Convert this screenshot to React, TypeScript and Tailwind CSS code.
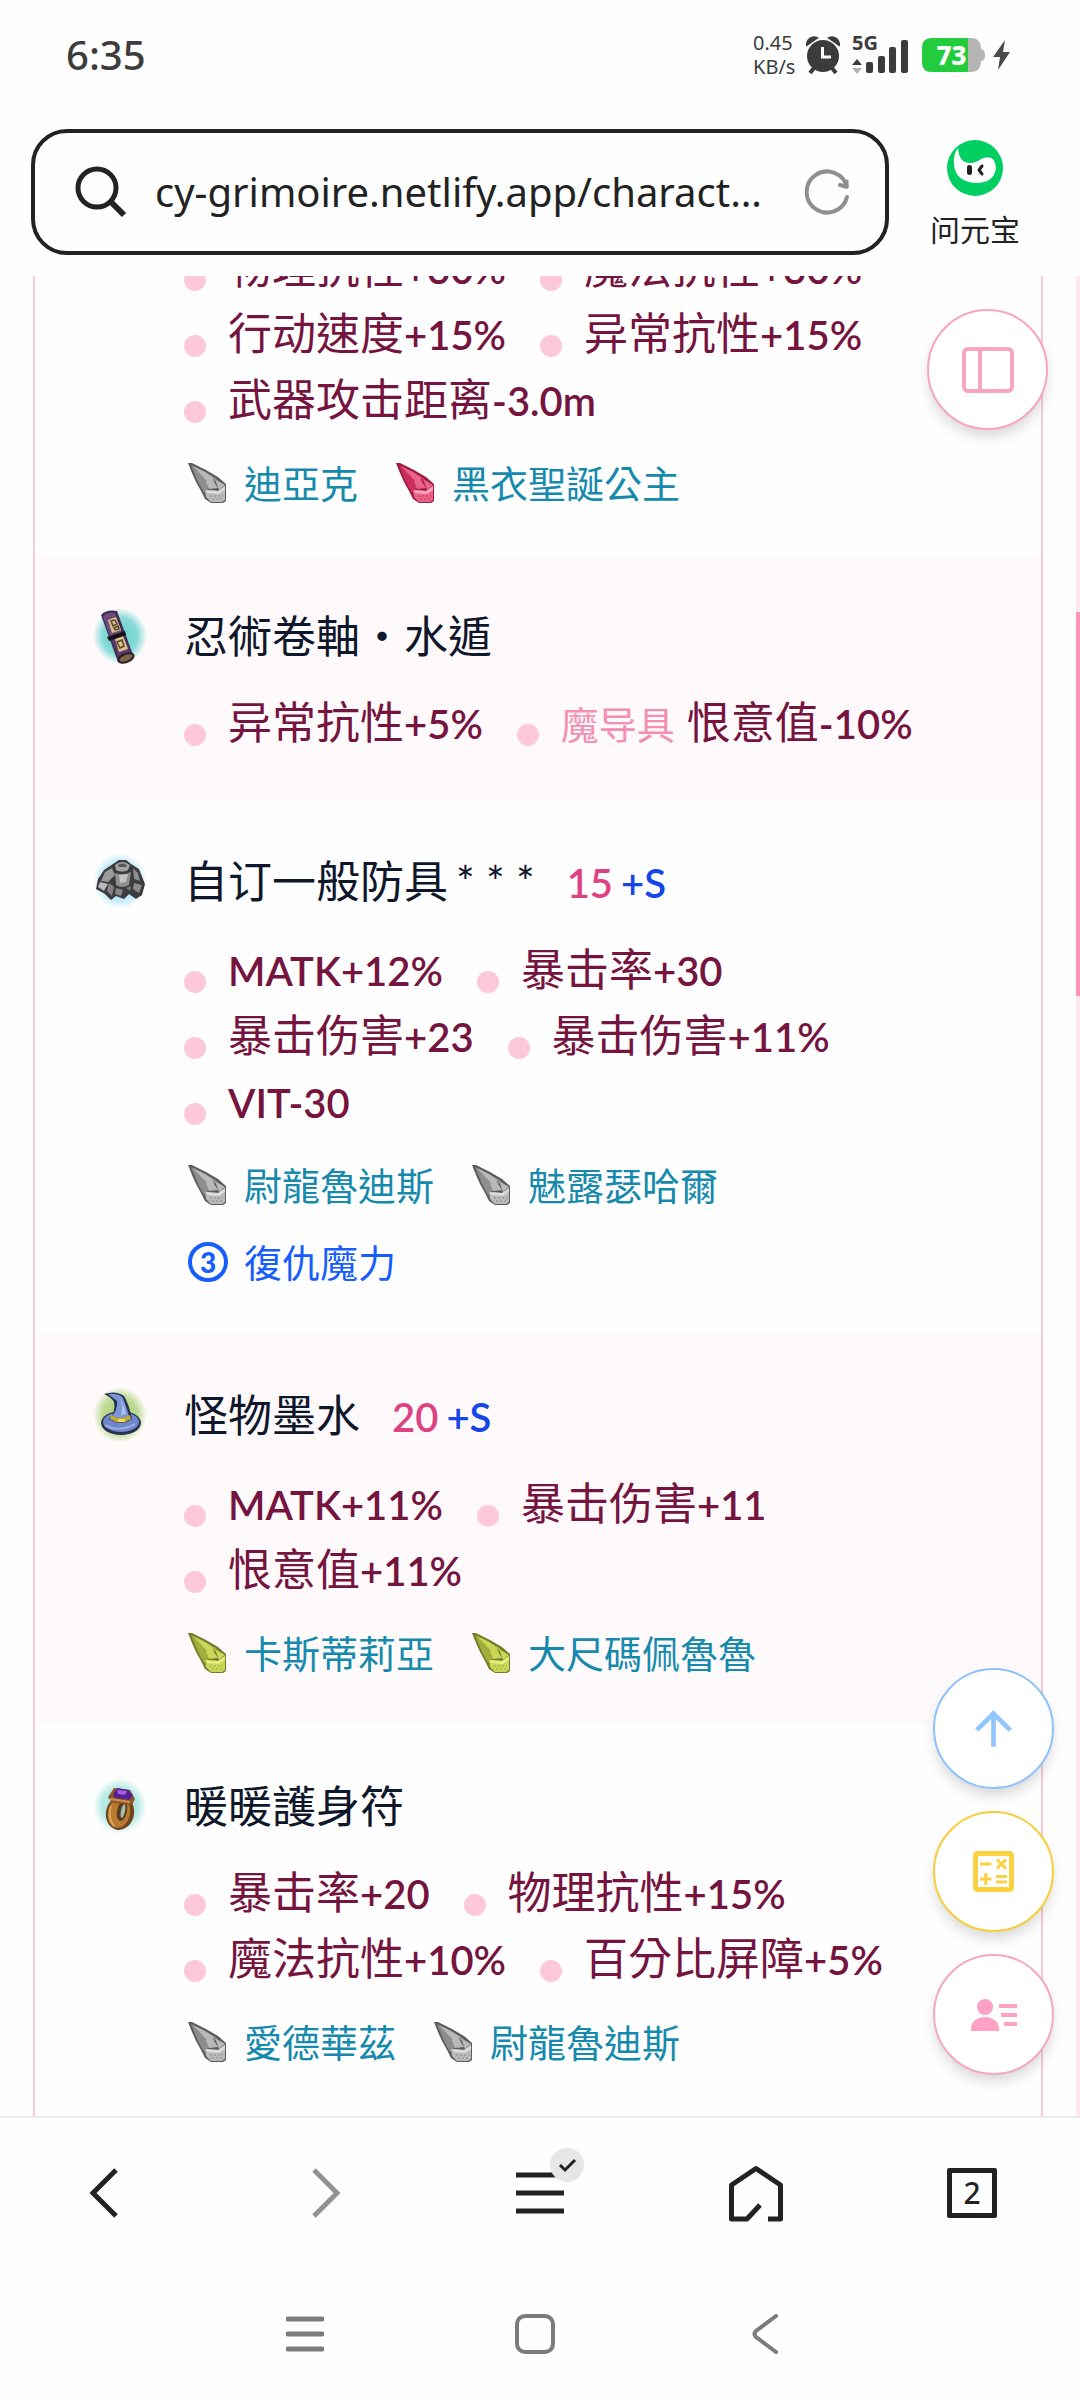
import type { ReactNode } from "react";

const uiFont = "font-['Noto_Sans','Noto_Sans_CJK_SC',sans-serif]";
const cardFont = "font-['Lato','Noto_Sans_CJK_TC',sans-serif]";

type CrystalTone = "gray" | "red" | "lime";

interface Stat {
  tag?: string;
  name?: string;
  value: string;
}

interface Equipment {
  icon?: ReactNode;
  title?: string;
  stars?: string;
  refine?: string;
  stats: Stat[];
  crystals?: { tone: CrystalTone; name: string }[];
  skill?: string;
}

const crystalColors: Record<CrystalTone, [string, string, string, string]> = {
  gray: ["#5c5c5c", "#8d8d8d", "#b9b9b9", "#dcdcdc"],
  red: ["#a01a46", "#c92f5c", "#ea6489", "#fda3ba"],
  lime: ["#757c2c", "#a3ad3c", "#c9d657", "#e6f07f"],
};

function Crystal({ tone }: { tone: CrystalTone }) {
  const [edge, side, face, light] = crystalColors[tone];
  return (
    <svg viewBox="0 0 44 44" className="size-11 shrink-0" aria-hidden="true">
      <path d="M4 2 L8 2 L22 9 L34 16 L42 23 L42 40 L39 42 L27 42 L21 38 L17 30 L12 21 L8 12 Z" fill={edge} />
      <path d="M7 4 L21 11 L33 18 L24 28 L20 32 L14 21 Z" fill={side} />
      <path d="M9 5 L21 11 L30 17 L25 22 Z" fill={face} />
      <path d="M22 20 L28 18 L34 27 L25 28 Z" fill={face} />
      <path d="M31 18 L41 24 L35 29 Z" fill={face} />
      <path d="M21 29 L35 30 L41 25 L41 39 L38 41 L27 41 L22 36 Z" fill={face} />
      <path d="M22 29 L34 30 L41 25 L41 29 L35 33 L23 32 Z" fill={light} />
      <path d="M28 38 h11 M26 35 h13" stroke={side} strokeWidth="1" strokeDasharray="2 2" />
    </svg>
  );
}

function Glow({ id, color }: { id: string; color: string }) {
  return (
    <>
      <defs>
        <radialGradient id={id}>
          <stop offset="0" stopColor={color} />
          <stop offset="0.65" stopColor={color} stopOpacity="0.75" />
          <stop offset="1" stopColor={color} stopOpacity="0" />
        </radialGradient>
      </defs>
      <ellipse cx="28" cy="28" rx="27" ry="28" fill={`url(#${id})`} />
    </>
  );
}

function ScrollIcon() {
  return (
    <svg viewBox="0 0 56 56" className="size-14" aria-hidden="true">
      <Glow id="glow-scroll" color="#5fcfcb" />
      <path d="M9 7 Q14 1 25 3 L41 47 Q36 56 26 54 Z" fill="#3f2a4d" />
      <path d="M11 8 Q16 3 23 5 L30 25 L18 29 Z" fill="#6d4a7c" />
      <path d="M19 31 L32 27 L39 46 Q34 49 27 50 Z" fill="#5a3b68" />
      <path d="M16 12 L24 9 L29 22 L20 25 Z" fill="#d9c28c" />
      <path d="M23 31 L31 28 L36 41 L27 44 Z" fill="#d9c28c" />
      <path d="M19 13 L23 12 L25 16 L21 18 Z M22 20 L26 18 L27 21 L23 22 Z M25 34 L30 32 L32 38 L28 40 Z" fill="none" stroke="#59442c" strokeWidth="1.5" />
      <path d="M15 29 L33 23 L34 27 L17 33 Z" fill="#16121b" />
      <ellipse cx="34" cy="50" rx="8" ry="4" transform="rotate(-22 34 50)" fill="#7b6745" stroke="#2a1d2d" strokeWidth="2" />
    </svg>
  );
}

function ArmorIcon() {
  return (
    <svg viewBox="0 0 56 56" className="size-14" aria-hidden="true">
      <Glow id="glow-armor" color="#a5e2f4" />
      <path d="M21 11 L27 7 H34 L39 11 L47 16 L53 31 L50 42 L44 46 L37 41 L32 46 L24 43 L19 47 L13 41 L4 36 L6 26 L12 17 Z" fill="#3c3c3e" />
      <path d="M23 12 Q30 6 38 12 L36 17 Q30 20 24 17 Z" fill="#a4a4a4" />
      <path d="M26 12 Q30 9 35 12 L34 14 H27 Z" fill="#555" />
      <path d="M23 20 Q31 23 39 19 L37 32 Q30 36 24 32 Z" fill="#8f8f8f" />
      <path d="M27 22 L36 21 L34 29 L28 30 Z" fill="#c4c4c4" />
      <path d="M13 19 L20 15 L23 22 L16 29 L9 28 Z" fill="#9b9b9b" />
      <path d="M8 29 L16 31 L12 38 L6 34 Z" fill="#b9b9b9" />
      <path d="M17 30 L22 34 L20 43 L15 38 Z M24 35 L31 37 L29 43 L23 41 Z" fill="#858585" />
      <path d="M41 15 L46 20 L48 28 L42 26 Z M42 30 L50 32 L47 40 L41 36 Z" fill="#8c8c8c" />
      <path d="M34 35 L39 33 L38 38 Z" fill="#777" />
    </svg>
  );
}

function HatIcon() {
  return (
    <svg viewBox="0 0 56 56" className="size-14" aria-hidden="true">
      <Glow id="glow-hat" color="#a9cf71" />
      <ellipse cx="29" cy="36" rx="20" ry="12" fill="#27324f" />
      <ellipse cx="29" cy="35" rx="18" ry="10" fill="#6f87ca" />
      <path d="M12 7 Q24 3 32 9 Q37 17 40 32 Q29 40 17 32 Q24 25 22 15 Q19 10 12 7 Z" fill="#27324f" />
      <path d="M16 7 Q27 6 31 11 Q34 19 37 29 Q29 33 20 29 Q26 22 25 14 Z" fill="#7c96da" />
      <path d="M27 10 Q32 17 34 27 L29 28 Q32 18 27 10 Z" fill="#b0c0ee" />
      <path d="M19 28 Q28 34 38 28 L39 32 Q29 39 18 32 Z" fill="#c5aa35" />
      <path d="M26 32 h7 v3 h-7 Z" fill="#eadd65" />
      <path d="M13 38 Q27 46 43 37" fill="none" stroke="#9cb0e8" strokeWidth="2" />
    </svg>
  );
}

function RingIcon() {
  return (
    <svg viewBox="0 0 56 56" className="size-14" aria-hidden="true">
      <Glow id="glow-ring" color="#9fe3de" />
      <ellipse cx="28" cy="35" rx="14" ry="17" transform="rotate(12 28 35)" fill="#6f431b" />
      <ellipse cx="27" cy="35" rx="11" ry="15" transform="rotate(12 27 35)" fill="#b87a32" />
      <ellipse cx="30" cy="33" rx="5" ry="10" transform="rotate(12 30 33)" fill="#5b3a1d" />
      <ellipse cx="31" cy="33" rx="2" ry="7" transform="rotate(12 31 33)" fill="#9fbfae" />
      <path d="M19 28 Q15 39 22 48" fill="none" stroke="#dba85c" strokeWidth="2" />
      <path d="M16 19 L22 10 L38 12 L43 21 L40 27 L20 25 Z" fill="#8f5729" />
      <path d="M21 17 L25 10 L37 12 L41 18 L37 22 L23 20 Z" fill="#57208d" />
      <path d="M25 12 L35 13 L33 17 L26 16 Z" fill="#a55fe0" />
      <path d="M18 21 L38 24" stroke="#cf8f50" strokeWidth="2" />
    </svg>
  );
}

const equipment: Equipment[] = [
  {
    stats: [
      { name: "物理抗性", value: "+30%" },
      { name: "魔法抗性", value: "+30%" },
      { name: "行动速度", value: "+15%" },
      { name: "异常抗性", value: "+15%" },
      { name: "武器攻击距离", value: "-3.0m" },
    ],
    crystals: [
      { tone: "gray", name: "迪亞克" },
      { tone: "red", name: "黑衣聖誕公主" },
    ],
  },
  {
    icon: <ScrollIcon />,
    title: "忍術卷軸・水遁",
    stats: [
      { name: "异常抗性", value: "+5%" },
      { tag: "魔导具", name: "恨意值", value: "-10%" },
    ],
  },
  {
    icon: <ArmorIcon />,
    title: "自订一般防具",
    stars: "* * *",
    refine: "15",
    stats: [
      { value: "MATK+12%" },
      { name: "暴击率", value: "+30" },
      { name: "暴击伤害", value: "+23" },
      { name: "暴击伤害", value: "+11%" },
      { value: "VIT-30" },
    ],
    crystals: [
      { tone: "gray", name: "尉龍魯迪斯" },
      { tone: "gray", name: "魅露瑟哈爾" },
    ],
    skill: "復仇魔力",
  },
  {
    icon: <HatIcon />,
    title: "怪物墨水",
    refine: "20",
    stats: [
      { value: "MATK+11%" },
      { name: "暴击伤害", value: "+11" },
      { name: "恨意值", value: "+11%" },
    ],
    crystals: [
      { tone: "lime", name: "卡斯蒂莉亞" },
      { tone: "lime", name: "大尺碼佩魯魯" },
    ],
  },
  {
    icon: <RingIcon />,
    title: "暖暖護身符",
    stats: [
      { name: "暴击率", value: "+20" },
      { name: "物理抗性", value: "+15%" },
      { name: "魔法抗性", value: "+10%" },
      { name: "百分比屏障", value: "+5%" },
    ],
    crystals: [
      { tone: "gray", name: "愛德華茲" },
      { tone: "gray", name: "尉龍魯迪斯" },
    ],
  },
];

function EquipmentRow({ item }: { item: Equipment }) {
  return (
    <li className={`flex gap-9 pr-11 pb-[39px] pl-[57px] even:bg-[#fefafb] ${item.title ? "pt-12" : ""}`}>
      <div className="flex h-[66px] w-14 shrink-0 items-center">{item.icon}</div>
      <div className="min-w-0 flex-1">
        {item.title && (
          <h2 className="mb-[22px] flex items-baseline text-[44px] leading-[66px] text-slate-900">
            <span>{item.title}</span>
            {item.stars && <span className="ml-2">{item.stars}</span>}
            {item.refine && (
              <span className="ml-8 flex gap-2 text-[40px] font-semibold">
                <span className="text-[#dd4383]">{item.refine}</span>
                <span className="text-blue-700">+S</span>
              </span>
            )}
          </h2>
        )}
        <ul className="mb-1 flex flex-wrap gap-x-[34px] text-[44px] leading-[66px] text-[#75143f]">
          {item.stats.map((stat) => (
            <li key={`${stat.name}${stat.value}`} className="flex h-[66px] items-end gap-[22px]">
              <span className="mb-[11px] size-[22px] rounded-full bg-[#fdc9da]" />
              <span className="whitespace-nowrap">
                {stat.tag && <span className="mr-3 text-[38px] text-[#f48fb1]">{stat.tag}</span>}
                {stat.name}
                <span className="text-[40px] font-semibold">{stat.value}</span>
              </span>
            </li>
          ))}
        </ul>
        {item.crystals && (
          <ul className="mt-4 flex flex-wrap gap-x-[34px] text-[38px] leading-[66px] text-[#168aad]">
            {item.crystals.map((crystal) => (
              <li key={crystal.name} className="flex items-center gap-4">
                <Crystal tone={crystal.tone} />
                {crystal.name}
              </li>
            ))}
          </ul>
        )}
        {item.skill && (
          <div className="mt-[11px] flex items-center gap-4 text-[38px] leading-[66px] text-blue-600">
            <span className="ml-1 flex size-10 items-center justify-center rounded-full border-4 border-blue-600 text-[28px] leading-none font-black">3</span>
            {item.skill}
          </div>
        )}
      </div>
    </li>
  );
}

function StatusBar() {
  return (
    <div className="flex h-[110px] shrink-0 items-center justify-between pr-[70px] pl-[66px] text-[#3c3c3c]">
      <time className="text-[40px] leading-none font-medium">6:35</time>
      <div className="flex items-center">
        <div className="w-[53px] text-xl leading-6">
          <div>0.45</div>
          <div>KB/s</div>
        </div>
        <svg viewBox="0 0 34 40" className="h-10 w-[34px]" aria-label="Alarm">
          <circle cx="17" cy="21" r="16" fill="#3c3c3c" />
          <path d="M1 10 A7 7 0 0 1 11 3 Z M33 10 A7 7 0 0 0 23 3 Z" fill="#3c3c3c" stroke="#3c3c3c" strokeWidth="2" />
          <path d="M8 33 L4 38 M26 33 L30 38" stroke="#3c3c3c" strokeWidth="4" />
          <path d="M16.500 12 V22 H25" fill="none" stroke="#fff" strokeWidth="3" />
        </svg>
        <div className="relative ml-3 h-10 w-14">
          <span className="absolute top-0 left-0 text-xl leading-4 font-bold">5G</span>
          <svg viewBox="0 0 56 40" className="size-full" aria-label="Signal">
            <rect x="14" y="27" width="7" height="11" rx="2" fill="#3c3c3c" />
            <rect x="26" y="21" width="7" height="17" rx="2" fill="#3c3c3c" />
            <rect x="37" y="12" width="7" height="26" rx="2" fill="#3c3c3c" />
            <rect x="49" y="5" width="7" height="33" rx="2" fill="#3c3c3c" />
            <path d="M5 24 L10 30 H0 Z" fill="#3c3c3c" />
            <path d="M5 39 L10 33 H0 Z" fill="#b0b0b0" />
          </svg>
        </div>
        <div className="relative ml-[14px] h-[34px] w-[63px]">
          <svg viewBox="0 0 63 34" className="size-full" aria-hidden="true">
            <path d="M10 0 H49 Q59 0 59 11 Q63 11 63 17 Q63 23 59 23 Q59 34 49 34 H10 Q0 34 0 24 V10 Q0 0 10 0 Z" fill="#b5b5b5" />
            <path d="M10 0 H46 V34 H10 Q0 34 0 24 V10 Q0 0 10 0 Z" fill="#23cc3d" />
          </svg>
          <span className="absolute inset-0 flex items-center justify-center pr-1 text-[26px] leading-none font-extrabold text-white">73</span>
        </div>
        <svg viewBox="0 0 17 30" className="ml-2 h-[30px] w-[17px]" aria-label="Charging">
          <path d="M12 0 L0 17 H7 L5 30 L17 12 H10 Z" fill="#4a4a4a" />
        </svg>
      </div>
    </div>
  );
}

function Toolbar() {
  return (
    <header className="flex h-[166px] shrink-0 items-start pt-[19px] pr-[19px] pl-[31px]">
      <div className="flex h-[126px] min-w-0 flex-1 items-center rounded-[36px] border-4 border-[#222] pr-9 pl-10">
        <svg viewBox="0 0 52 52" className="size-[52px] shrink-0" fill="none" stroke="#222" strokeWidth="5" aria-hidden="true">
          <circle cx="22" cy="22" r="19" />
          <path d="M36 36 L49 49" strokeWidth="6" />
        </svg>
        <input
          type="text"
          aria-label="网址"
          defaultValue="cy-grimoire.netlify.app/charact…"
          className="ml-7 min-w-0 flex-1 text-[40px] leading-[60px] text-[#222] outline-none"
        />
        <button type="button" aria-label="刷新">
          <svg viewBox="0 0 44 46" className="h-[46px] w-11" fill="none" stroke="#8f8f8f" strokeWidth="4" strokeLinecap="round" aria-hidden="true">
            <path d="M42 28 A20.500 20.500 0 1 1 42 18 L35 16" strokeLinejoin="bevel" />
            <path d="M42 18 V12" strokeWidth="3" />
          </svg>
        </button>
      </div>
      <button type="button" className="flex w-[172px] flex-col items-center gap-4 pt-[11px] text-[#222]">
        <svg viewBox="0 0 56 56" className="size-14" aria-hidden="true">
          <circle cx="28" cy="28" r="28" fill="#00d062" />
          <path d="M11 8 Q12 23 23 23 Q29 23 34 19 Q48 13 49 28 Q47 43 29 43 Q9 42 7 25 Q6 14 11 8 Z" fill="#fff" />
          <rect x="20" y="25" width="5" height="10" rx="2.500" fill="#222" />
          <path d="M35 26 L32 30 L35 34" fill="none" stroke="#222" strokeWidth="3" strokeLinecap="round" strokeLinejoin="round" />
        </svg>
        <span className="text-[30px] leading-9">问元宝</span>
      </button>
    </header>
  );
}

function FloatingButton({ label, tone, children }: { label: string; tone: string; children: ReactNode }) {
  return (
    <button
      type="button"
      aria-label={label}
      className={`flex size-[121px] items-center justify-center rounded-full border-2 bg-white shadow-[0_8px_14px_-2px_rgba(0,0,0,0.16)] ${tone}`}
    >
      {children}
    </button>
  );
}

function FloatingButtons() {
  return (
    <>
      <div className="absolute top-[33px] right-8">
        <FloatingButton label="侧栏" tone="border-[#f8a5c0] text-[#f8a5c0]">
          <svg viewBox="0 0 52 46" className="h-[46px] w-[52px]" fill="none" stroke="currentColor" strokeWidth="4" aria-hidden="true">
            <rect x="2" y="2" width="48" height="42" rx="4" />
            <path d="M18 2 V44" />
          </svg>
        </FloatingButton>
      </div>
      <div className="absolute right-[26px] bottom-[41px] flex flex-col gap-[22px]">
        <FloatingButton label="回到顶部" tone="border-[#90c2f9] text-[#90c5fd]">
          <svg viewBox="0 0 24 24" className="size-[55px]" fill="currentColor" aria-hidden="true">
            <path d="m4 12 1.410 1.410L11 7.830V20h2V7.830l5.580 5.590L20 12l-8-8z" />
          </svg>
        </FloatingButton>
        <FloatingButton label="计算" tone="border-[#f5cf3b] text-[#fad23f]">
          <svg viewBox="0 0 41 41" className="size-[41px]" fill="none" stroke="currentColor" strokeWidth="5" aria-hidden="true">
            <rect x="2.500" y="2.500" width="36" height="36" rx="2" />
            <path d="M7 13 H18.500 M7 28 H18.500 M12.800 22 V34 M23 25.500 H34 M23 31 H34" strokeWidth="3" />
            <path d="M24 8.500 L33 17.500 M33 8.500 L24 17.500" strokeWidth="3" />
          </svg>
        </FloatingButton>
        <FloatingButton label="角色列表" tone="border-[#f4a7c0] text-[#ffa1c2]">
          <svg viewBox="0 0 46 32" className="h-8 w-[46px]" fill="currentColor" aria-hidden="true">
            <circle cx="14" cy="8" r="8" />
            <path d="M0 32 V30 C0 14 28 14 28 30 V32 Z" />
            <path d="M28 5 H46 V9 H28 Z M30 14 H46 V18 H30 Z M33 23 H46 V27 H33 Z" />
          </svg>
        </FloatingButton>
      </div>
    </>
  );
}

function BrowserNav() {
  return (
    <nav className="grid h-[152px] shrink-0 grid-cols-5 place-items-center border-t-2 border-[#ececec] text-[#222]">
      <button type="button" aria-label="后退">
        <svg viewBox="0 0 30 50" className="mr-2 h-[50px] w-[30px]" fill="none" stroke="currentColor" strokeWidth="5" aria-hidden="true">
          <path d="M27 2 L4 25 L27 48" />
        </svg>
      </button>
      <button type="button" aria-label="前进">
        <svg viewBox="0 0 30 50" className="ml-1 h-[50px] w-[30px]" fill="none" stroke="#929292" strokeWidth="5" aria-hidden="true">
          <path d="M3 2 L26 25 L3 48" />
        </svg>
      </button>
      <button type="button" aria-label="菜单" className="relative">
        <svg viewBox="0 0 48 42" className="h-[42px] w-12" stroke="currentColor" strokeWidth="5" aria-hidden="true">
          <path d="M0 3 H48 M0 21 H48 M0 39 H48" />
        </svg>
        <svg viewBox="0 0 34 34" className="absolute -top-6 -right-5 size-[34px]" aria-hidden="true">
          <circle cx="17" cy="17" r="17" fill="#e6e6e6" />
          <path d="M10 17 L15 22 L25 12" fill="none" stroke="#222" strokeWidth="3" />
        </svg>
      </button>
      <button type="button" aria-label="主页">
        <svg viewBox="0 0 54 57" className="h-[57px] w-[54px]" fill="none" stroke="currentColor" strokeWidth="5" strokeLinejoin="round" aria-hidden="true">
          <path d="M39 54 H51.500 V20 L27 3.500 L2.500 20 V54 H18 L31 40" />
        </svg>
      </button>
      <button type="button" aria-label="标签页" className="flex size-[50px] items-center justify-center rounded-xs border-5 border-[#222] text-[30px] leading-none font-medium">
        2
      </button>
    </nav>
  );
}

function SystemNav() {
  return (
    <nav className="grid h-[132px] shrink-0 grid-cols-3 place-items-center pr-[200px] pl-[190px] text-[#7b7b7b]">
      <button type="button" aria-label="最近任务">
        <svg viewBox="0 0 38 36" className="h-9 w-[38px]" stroke="currentColor" strokeWidth="5" strokeLinecap="round" aria-hidden="true">
          <path d="M2 3 H36 M2 18 H36 M2 33 H36" />
        </svg>
      </button>
      <button type="button" aria-label="桌面">
        <svg viewBox="0 0 40 40" className="size-10" fill="none" stroke="currentColor" strokeWidth="4" aria-hidden="true">
          <rect x="2" y="2" width="36" height="36" rx="8" />
        </svg>
      </button>
      <button type="button" aria-label="返回">
        <svg viewBox="0 0 26 40" className="h-10 w-[26px]" fill="none" stroke="currentColor" strokeWidth="4" strokeLinecap="round" aria-hidden="true">
          <path d="M24 2 L4 17 Q1 20 4 23 L24 38" />
        </svg>
      </button>
    </nav>
  );
}

export default function App() {
  return (
    <div className={`flex h-screen flex-col overflow-hidden bg-[#fefefe] ${uiFont}`}>
      <StatusBar />
      <Toolbar />
      <main className={`relative flex min-h-0 flex-1 overflow-hidden ${cardFont}`}>
        <div className="min-w-0 flex-1 pr-[33px] pl-[33px]">
          <ul className="-mt-10 min-h-[1880px] border-x-2 border-[#f7cbd6]">
            {equipment.map((item, index) => (
              <EquipmentRow key={index} item={item} />
            ))}
          </ul>
        </div>
        <div className="flex w-1 flex-col bg-[#fdeaf0]">
          <div className="mt-[336px] h-96 bg-[#ff94b5]" />
        </div>
        <FloatingButtons />
      </main>
      <BrowserNav />
      <SystemNav />
    </div>
  );
}
